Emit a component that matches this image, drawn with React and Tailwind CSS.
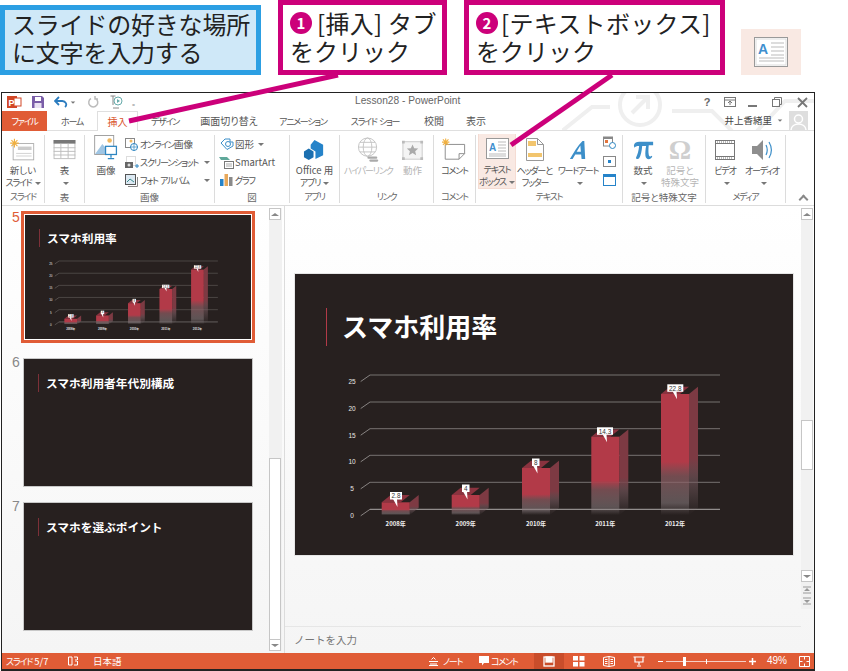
import React from "react";

const FONT = "font-['Noto_Sans_CJK_JP','Noto_Sans',sans-serif]";
const PALT = "[font-feature-settings:'palt']";

function K({ t }) {
  return t.split(/([ァ-ヶー]+)/).map((s, i) =>
    i % 2 === 1 ? (
      <span key={i} className="text-[9px] tracking-[-1.2px]">
        {s}
      </span>
    ) : (
      <span key={i}>{s}</span>
    )
  );
}

const BARS = [
  { x: 86.7, top: 228.3, lx: 95, lw: 12, ly: 218, tail: 100.5, label: "2.8", year: "2008年" },
  { x: 156.7, top: 221, lx: 167, lw: 7.5, ly: 210.5, tail: 170.5, label: "4", year: "2009年" },
  { x: 227, top: 194, lx: 237, lw: 7.5, ly: 184.5, tail: 240.5, label: "8", year: "2010年" },
  { x: 296.3, top: 162.7, lx: 302, lw: 16, ly: 153.3, tail: 310, label: "14.3", year: "2011年" },
  { x: 366, top: 120, lx: 372.3, lw: 16, ly: 110.3, tail: 380, label: "22.8", year: "2012年" },
];
const GRID = [235.3, 208.3, 181.3, 154.7, 128, 101];
const AXIS = ["0", "5", "10", "15", "20", "25"];

function Chart({ id }) {
  const bottom = 241;
  return (
    <svg viewBox="0 90 498 191" className="block w-full">
      <defs>
        <linearGradient id={`front${id}`} x1="0" y1="0" x2="0" y2="1">
          <stop offset="0" stopColor="#b23a48" />
          <stop offset="0.56" stopColor="#b23a48" />
          <stop offset="0.68" stopColor="#8c5a60" stopOpacity="0.75" />
          <stop offset="0.9" stopColor="#8a7d80" stopOpacity="0.55" />
          <stop offset="1" stopColor="#8a7d80" stopOpacity="0" />
        </linearGradient>
        <linearGradient id={`side${id}`} x1="0" y1="0" x2="0" y2="1">
          <stop offset="0" stopColor="#7d3a43" />
          <stop offset="0.56" stopColor="#7d3a43" />
          <stop offset="0.72" stopColor="#7a5a60" stopOpacity="0.6" />
          <stop offset="1" stopColor="#7a6a6d" stopOpacity="0" />
        </linearGradient>
      </defs>
      {GRID.map((y, i) => (
        <g key={y} strokeWidth="0.8" fill="none">
          <path d={`M75 ${y}H425`} stroke={i === 0 ? "#cfcdcc" : "#8c8887"} />
          <path d={`M65.7 ${y + 6.5}L75 ${y}`} stroke="#a09c9b" />
        </g>
      ))}
      {AXIS.map((t, i) => (
        <text key={t} x="57" y={GRID[i] + 8.8} textAnchor="middle" fontSize="6.5" fill="#e8e6e5" fontFamily="Liberation Sans, sans-serif">
          {t}
        </text>
      ))}
      {BARS.map((b) => (
        <g key={b.year}>
          <path d={`M${b.x} ${b.top}l9 -7.3h19l-9 7.3z`} fill="#8a333f" />
          <path d={`M${b.x + 28} ${b.top}l9 -7.3V${bottom - 7.3}l-9 7.3z`} fill={`url(#side${id})`} />
          <rect x={b.x} y={b.top} width="28" height={bottom - b.top} fill={`url(#front${id})`} />
          <rect x={b.lx} y={b.ly} width={b.lw} height="7.5" fill="#fff" />
          <path d={`M${b.tail - 2.5} ${b.ly + 7}h4l0.5 8z`} fill="#fff" />
          <text x={b.lx + b.lw / 2} y={b.ly + 6.2} textAnchor="middle" fontSize="6.4" fill="#333" fontFamily="Liberation Sans, sans-serif">
            {b.label}
          </text>
          <text x={b.x + 14} y="252" textAnchor="middle" fontSize="6" fill="#eee" fontWeight="700" fontFamily="'Noto Sans CJK JP', sans-serif">
            {b.year}
          </text>
        </g>
      ))}
    </svg>
  );
}

function ThumbTitle({ children, top }) {
  return (
    <div className={`flex items-center ml-[14px] ${top}`}>
      <div className="w-px h-[18px] bg-[#7d3038]" />
      <div className="ml-[7px] -mt-[1px] text-[11.7px] leading-[18px] font-bold text-white whitespace-nowrap">{children}</div>
    </div>
  );
}

function Thumb({ num, title, active, chart }) {
  return (
    <div className="flex">
      <div className={`w-[19px] pl-[10px] text-[14px] leading-[20px] font-['Liberation_Sans',sans-serif] ${active ? "text-[#e05c36] -mt-[4px]" : "text-[#888] -mt-[6px]"}`}>{num}</div>
      {active ? (
        <div className="border-[3px] border-[#e05c36] w-[234px] h-[132px] bg-white p-px">
          <div className="h-full bg-[#27201f] overflow-hidden">
            <ThumbTitle top="pt-[14px]">{title}</ThumbTitle>
            {chart && (
              <div className="mt-[9px]">
                <Chart id="t" />
              </div>
            )}
          </div>
        </div>
      ) : (
        <div className="ml-[2px] border border-[#c8c8c8] w-[230px] h-[129px] bg-[#27201f]">
          <ThumbTitle top="pt-[15px]">{title}</ThumbTitle>
        </div>
      )}
    </div>
  );
}

function Caret({ className = "" }) {
  return <span className={`inline-block w-0 h-0 border-x-[3px] border-x-transparent border-t-[3px] border-t-[#777] align-middle ${className}`} />;
}

function ScrollBtn({ up }) {
  return (
    <div className="w-[12px] h-[12px] border border-[#c6c6c6] bg-white flex items-center justify-center">
      <span className={`w-0 h-0 border-x-[4px] border-x-transparent ${up ? "border-b-[3px] border-b-[#888]" : "border-t-[3px] border-t-[#888]"}`} />
    </div>
  );
}

function BigBtn({ icon, lines, gray, w, caretLine }) {
  return (
    <div className={`flex flex-col items-center ${w || ""} shrink-0`}>
      <div className="h-[29px] flex items-center justify-center">{icon}</div>
      <div className={`text-[9.5px] leading-[12px] text-center whitespace-nowrap ${gray ? "text-[#b5b5b5]" : "text-[#555]"}`}>
        {lines.map((l, i) => (
          <div key={i} className="h-[12px]">
            <K t={l} />
            {caretLine === i && <Caret className="ml-[3px]" />}
          </div>
        ))}
      </div>
    </div>
  );
}

function Group({ w, label, children, className = "" }) {
  return (
    <div className={`${w} shrink-0 flex flex-col h-[68px] mt-[4px] border-r border-[#dcdcdc]`}>
      <div className={`h-[57px] flex ${className}`}>{children}</div>
      <div className="text-[9.5px] leading-[12px] text-[#666] text-center whitespace-nowrap">
        <K t={label} />
      </div>
    </div>
  );
}

function SmallRow({ icon, text, caret, textW = "" }) {
  return (
    <div className="flex items-center h-[18px] text-[9.5px] text-[#555] whitespace-nowrap">
      <span className="w-[15px] h-[14px] flex items-center justify-center mr-[1px]">{icon}</span>
      <span className={textW}>
        <K t={text} />
      </span>
      {caret && <Caret className="ml-[4px]" />}
    </div>
  );
}

const NewSlideIcon = (
  <svg width="26" height="24" viewBox="0 0 30 28">
    <rect x="3.5" y="6.5" width="24" height="19" fill="#fff" stroke="#aaa" />
    <rect x="9" y="10" width="16" height="4" fill="#ccc" />
    <path d="M7 18h18M7 21h18" stroke="#ccc" />
    <g stroke="#f0b040" strokeWidth="1.3">
      <path d="M5 1v10M0 6h10M1.5 2.5l7 7M8.5 2.5l-7 7" />
    </g>
  </svg>
);
const TableIcon = (
  <svg width="23" height="20" viewBox="0 0 24 22">
    <rect x="0.5" y="0.5" width="23" height="20" fill="#fff" stroke="#bbb" />
    <rect x="0" y="0" width="24" height="4" fill="#777" />
    <path d="M8 4v16M16 4v16M0 8.5h24M0 12.5h24M0 16.5h24" stroke="#bbb" />
  </svg>
);
const PictureIcon = (
  <svg width="24" height="29" viewBox="0 0 26 32">
    <rect x="0.5" y="0.5" width="21" height="21" fill="#fff" stroke="#999" />
    <path d="M1 21l8 -11 6 7 v4z" fill="#9fc5e3" />
    <circle cx="17" cy="6" r="2.5" fill="#f0b860" />
    <rect x="12.5" y="12.5" width="12" height="9" fill="#fff" stroke="#2e86c1" strokeWidth="1.4" />
    <path d="M18.5 22v3M15 26h7" stroke="#2e86c1" strokeWidth="1.4" />
  </svg>
);
const OfficeIcon = (
  <svg width="23" height="23" viewBox="0 0 24 24">
    <path d="M12 2l9 5v11l-8 4v-8l-5 -3V7z" fill="#2583c9" />
    <path d="M1 14l5 -3 5 3v6l-5 3 -5 -3z" fill="#1b6fb0" />
  </svg>
);
const GlobeIcon = (
  <svg width="23" height="26" viewBox="0 0 24 26" fill="none" stroke="#c4c4c4">
    <circle cx="11" cy="10" r="9.5" />
    <ellipse cx="11" cy="10" rx="4.5" ry="9.5" />
    <path d="M1.5 10h19M3 5h16M3 15h16" />
    <path d="M12 21h8M14 24h7" stroke="#aaa" strokeWidth="2.4" strokeLinecap="round" />
  </svg>
);
const ActionIcon = (
  <svg width="22" height="22" viewBox="0 0 24 24">
    <rect x="1" y="3" width="21" height="19" fill="#f4f4f4" stroke="#c8c8c8" />
    <path d="M11.5 6l1.8 4 4.4.4 -3.3 2.9 1 4.3 -3.9 -2.3 -3.9 2.3 1 -4.3 -3.3 -2.9 4.4 -.4z" fill="#aaa" />
    <path d="M0 2h3v3H0zM20 2h3v3h-3zM0 20h3v3H0zM20 20h3v3h-3z" fill="#bbb" />
  </svg>
);
const CommentIcon = (
  <svg width="24" height="23" viewBox="0 0 26 24" fill="none">
    <path d="M3.5 6.5h21v10l-6 6h-15z" fill="#fff" stroke="#888" />
    <path d="M18.5 22.5v-6h6" stroke="#888" />
    <g stroke="#f0b040" strokeWidth="1.2">
      <path d="M4 0v8M0 4h8M1 1l6 6M7 1l-6 6" />
    </g>
  </svg>
);
const TextBoxIcon = (
  <svg width="23" height="21" viewBox="0 0 23 21">
    <rect x="0.5" y="0.5" width="22" height="20" fill="#fff" stroke="#999" />
    <path d="M12 4h8M12 7h8M12 10h8M12 13h8M3 16h17M3 18h17" stroke="#bbb" />
    <text x="3" y="12.5" fontSize="10" fontWeight="700" fill="#3f8fcf" fontFamily="Liberation Sans, sans-serif">A</text>
  </svg>
);
const HeaderIcon = (
  <svg width="18" height="23" viewBox="0 0 18 23">
    <path d="M0.5 0.5h11l6 6v16h-17z" fill="#fff" stroke="#999" />
    <path d="M11.5 0.5v6h6" fill="none" stroke="#999" />
    <rect x="2" y="3" width="8" height="5" fill="#f2c56e" />
    <rect x="2" y="15" width="14" height="4" fill="#f2c56e" />
  </svg>
);
const WordArtIcon = (
  <svg width="18" height="22" viewBox="0 0 20 22">
    <path d="M1 21C5 14 10 6 15 1h2l1 20h-4l-.5 -5H7l-3 5zM8.5 13h4.7l-.6 -7z" fill="#3d8fc9" />
  </svg>
);
const PiIcon = (
  <svg width="21" height="20" viewBox="0 0 24 21">
    <path d="M1 5c1 -3 3 -4 6 -4h16v4h-5c-.5 4 -.5 8 0 11 .2 1.500 1 2 2 2l1.500 -1 .5 1c-1 2 -2.500 3 -4 3 -2 0 -3.500 -1.500 -3.800 -4 -.3 -3 0 -7 .8 -11h-4.500c-.5 6 -1.500 11 -3.500 14 -1 1.500 -4 1 -3.500 -1 1.500 -3 3 -7 3.500 -13-3 0-4.500 .5-5.500 2z" fill="#3d8fc9" />
  </svg>
);
const OmegaIcon = <span className="text-[28px] leading-[28px] font-bold text-[#cfcfcf] font-['Liberation_Serif',serif]">Ω</span>;
const VideoIcon = (
  <svg width="20" height="20" viewBox="0 0 20 20">
    <rect x="0.500" y="0.500" width="19" height="19" fill="#fff" stroke="#777" />
    <path d="M0 3.500h20M0 16.500h20" stroke="#777" />
    <path d="M2 2h16M2 18h16" stroke="#777" strokeDasharray="1 1" />
  </svg>
);
const AudioIcon = (
  <svg width="22" height="22" viewBox="0 0 22 22" fill="none">
    <path d="M1 7h5l6 -6v20l-6 -6H1z" fill="#8e8e8e" />
    <path d="M15 6c1.500 3 1.500 7 0 10M18 3c3 5 3 11 0 16" stroke="#3d8fc9" strokeWidth="1.200" />
  </svg>
);

const ImgSmall = (
  <svg width="13" height="13" viewBox="0 0 13 13">
    <rect x="0.500" y="0.500" width="9" height="9" fill="#fff" stroke="#888" />
    <circle cx="6" cy="3" r="1.500" fill="#f0b860" />
    <circle cx="9" cy="9" r="3.500" fill="#fff" stroke="#2e86c1" />
    <path d="M5.500 9h7M9 5.500v7" stroke="#2e86c1" strokeWidth="0.700" />
  </svg>
);
const ShotSmall = (
  <svg width="14" height="13" viewBox="0 0 14 13">
    <rect x="1.500" y="0.500" width="9" height="9" fill="none" stroke="#bbb" strokeDasharray="1 1" />
    <rect x="0" y="6" width="8" height="6" fill="#666" />
    <circle cx="4" cy="9" r="1.500" fill="#ddd" />
    <path d="M10 10h4M12 8v4" stroke="#2e86c1" />
  </svg>
);
const AlbumSmall = (
  <svg width="13" height="13" viewBox="0 0 13 13">
    <rect x="0.500" y="0.500" width="10" height="10" fill="#dce9f3" stroke="#555" />
    <path d="M3 12.500h9.500V3" stroke="#888" fill="none" />
    <path d="M2 8l3 -3 4 3" stroke="#3b8a8a" fill="none" />
  </svg>
);
const ShapeSmall = (
  <svg width="14" height="12" viewBox="0 0 14 12" fill="none" stroke="#3d8fc9">
    <path d="M1 5l4 -4h5v3h3v4l-6 3.500z" />
    <circle cx="8" cy="6" r="2.500" />
  </svg>
);
const SmartSmall = (
  <svg width="15" height="13" viewBox="0 0 15 13">
    <path d="M0 1h8l3 3H2z" fill="#5fa89a" />
    <rect x="5.500" y="5.500" width="9" height="7" fill="#fff" stroke="#777" />
    <path d="M7 8h6M7 10h6" stroke="#aaa" />
  </svg>
);
const GraphSmall = (
  <svg width="13" height="12" viewBox="0 0 13 12">
    <rect x="0" y="5" width="3.500" height="7" fill="#2583c9" />
    <rect x="4.500" y="0" width="3.500" height="12" fill="#e8a85a" />
    <rect x="9" y="3" width="3.500" height="9" fill="#8a8a8a" />
  </svg>
);

const TABS = [
  ["ホーム", "w-[50px]"],
  ["挿入", "w-[41px]", true],
  ["デザイン", "w-[54px]"],
  ["画面切り替え", "w-[74px]"],
  ["アニメーション", "w-[74px]"],
  ["スライド ショー", "w-[70px]"],
  ["校閲", "w-[48px]"],
  ["表示", "w-[36px]"],
];

function ViewIcon({ kind }) {
  if (kind === "normal")
    return (
      <svg width="12" height="11" viewBox="0 0 12 11" fill="none" stroke="#fff" strokeWidth="1.300">
        <rect x="1" y="1" width="10" height="9" />
        <rect x="3" y="1" width="6" height="5" fill="#fff" />
      </svg>
    );
  if (kind === "sorter")
    return (
      <svg width="12" height="11" viewBox="0 0 12 11" fill="#fff">
        <rect width="5" height="4.500" />
        <rect x="6.500" width="5" height="4.500" />
        <rect y="6" width="5" height="4.500" />
        <rect x="6.500" y="6" width="5" height="4.500" />
      </svg>
    );
  if (kind === "read")
    return (
      <svg width="12" height="11" viewBox="0 0 12 11" fill="none" stroke="#fff">
        <path d="M.5 1.500L6 .5l5.500 1v8L6 10.500.5 9.500zM6 .5v10M2 3.500h2.500M2 5.500h2.500M2 7.500h2.500M7.500 3.500H10M7.500 5.500H10M7.500 7.500H10" />
      </svg>
    );
  return (
    <svg width="12" height="11" viewBox="0 0 12 11" fill="none" stroke="#fff" strokeWidth="1.200">
      <path d="M.5 1h11M2 1v5h8V1M6 6v3M4 10h4" />
    </svg>
  );
}

export default function App() {
  return (
    <div className={`relative w-[848px] h-[671px] bg-white overflow-hidden text-[#222] ${FONT}`}>
      {/* Callouts */}
      <div className="flex items-end h-[75px]">
        <div className="w-[261px] h-[70px] border-[5px] border-[#2c9fe3] bg-[#cfe8f8] pl-[7px] text-[24px] leading-[28px] tracking-[-0.2px] whitespace-nowrap">
          <div>スライドの好きな場所</div>
          <div>に文字を入力する</div>
        </div>
        <div className="ml-[17px] w-[169px] h-[75px] border-[5px] border-[#cc007a] bg-white pl-[7px] pt-[4px] text-[24px] leading-[28px] whitespace-nowrap">
          <div className="flex items-center tracking-[0.3px]">
            <span className="w-[22px] h-[22px] mr-[5px] rounded-full bg-[#cc007a] text-white text-[15px] leading-[22px] font-bold text-center">1</span>[挿入] タブ
          </div>
          <div>をクリック</div>
        </div>
        <div className="ml-[17px] w-[261px] h-[75px] border-[5px] border-[#cc007a] bg-white pl-[7px] pt-[4px] text-[24px] leading-[28px] whitespace-nowrap">
          <div className="flex items-center tracking-[0.3px]">
            <span className="w-[22px] h-[22px] mr-[3px] rounded-full bg-[#cc007a] text-white text-[15px] leading-[22px] font-bold text-center">2</span>[テキストボックス]
          </div>
          <div>をクリック</div>
        </div>
        <div className="ml-[16px] w-[60px] h-[46px] bg-[#f9e9e3] flex items-center justify-center">
          <svg width="34" height="30" viewBox="0 0 34 30">
            <rect x="0.500" y="0.500" width="33" height="29" fill="#fff" stroke="#999" />
            <rect x="2" y="2" width="30" height="26" fill="none" stroke="#ddd" />
            <path d="M17 6h13M17 10h13M17 14h13M17 18h13M5 21h25M5 24h25" stroke="#bbb" />
            <text x="4" y="17" fontSize="14" fontWeight="700" fill="#3f8fcf" fontFamily="Liberation Sans, sans-serif">A</text>
          </svg>
        </div>
      </div>

      {/* PowerPoint window */}
      <div className="mt-[17px] ml-px w-[814px] h-[579px] border border-[#222] border-b-2 flex flex-col bg-white relative overflow-hidden">
        <svg className="absolute left-[560px] top-0 pointer-events-none" width="252" height="38" viewBox="0 0 252 38" fill="none" stroke="#efefef" strokeWidth="4">
          <circle cx="78" cy="12" r="20" />
          <path d="M70 20l16 -16M74 4h12v12" />
          <path d="M0 38L30 14h18M110 18h40l20 20M195 38l28 -30h30" />
        </svg>

        {/* Title bar */}
        <div className="h-[18px] flex items-center relative shrink-0">
          <div className="w-[5px]" />
          <svg width="15" height="14" viewBox="0 0 15 14" className="shrink-0">
            <rect x="0" y="1" width="10" height="12" fill="#d24726" />
            <rect x="7" y="3" width="7" height="8" fill="#fff" stroke="#d24726" />
            <text x="1.500" y="10.500" fontSize="9" fontWeight="700" fill="#fff" fontFamily="Liberation Sans, sans-serif">P</text>
          </svg>
          <svg width="12" height="12" viewBox="0 0 12 12" className="ml-[10px] shrink-0">
            <path d="M0 0h10l2 2v10H0z" fill="#7a5ea8" />
            <rect x="3" y="1" width="6" height="4" fill="#fff" />
            <rect x="2.500" y="7" width="7" height="5" fill="#e9e2f2" />
          </svg>
          <svg width="14" height="12" viewBox="0 0 14 12" fill="none" className="ml-[10px] shrink-0">
            <path d="M2 5h6a4 3.500 0 0 1 3 6" stroke="#2b7cbf" strokeWidth="1.800" />
            <path d="M5 1L1 5l4 4" stroke="#2b7cbf" strokeWidth="1.800" />
          </svg>
          <Caret className="ml-[2px] scale-75" />
          <svg width="12" height="12" viewBox="0 0 12 12" fill="none" stroke="#bcbcbc" strokeWidth="1.500" className="ml-[11px] shrink-0">
            <path d="M4 2.500a4.500 4.500 0 1 0 4.500 0M8 0v3h3" />
          </svg>
          <svg width="13" height="14" viewBox="0 0 13 14" fill="none" stroke="#888" className="ml-[11px] shrink-0">
            <path d="M.5 1h5M3 1v9" />
            <circle cx="8" cy="6" r="4" stroke="#6aa" />
            <path d="M7 4l3 2 -3 2z" fill="#6aa" stroke="none" />
            <path d="M3 13h6" />
          </svg>
          <span className="ml-[9px] text-[#888] text-[9px] leading-none">₌</span>
          <div className="absolute left-[353px] top-0 text-[10.2px] leading-[16px] text-[#666] font-['Liberation_Sans','Noto_Sans_CJK_JP',sans-serif] whitespace-nowrap">Lesson28 - PowerPoint</div>
          <div className="ml-auto flex items-center text-[#666] mr-[4px] relative">
            <span className="w-[14px] text-center text-[11px] font-bold leading-none font-['Liberation_Sans',sans-serif]">?</span>
            <svg width="12" height="10" viewBox="0 0 12 10" fill="none" stroke="#777" className="ml-[10px]">
              <rect x=".5" y=".5" width="11" height="9" />
              <path d="M.5 3h11M6 8V4.500M4 6l2 -2 2 2" />
            </svg>
            <span className="ml-[12px] w-[9px] h-[2px] bg-[#777] mt-[7px]" />
            <svg width="10" height="10" viewBox="0 0 10 10" fill="none" stroke="#777" className="ml-[15px]">
              <rect x=".5" y="2.500" width="7" height="7" />
              <path d="M2.500 2.500v-2h7v7h-2" />
            </svg>
            <svg width="11" height="11" viewBox="0 0 11 11" fill="none" stroke="#777" strokeWidth="1.800" className="ml-[15px] mr-[2px]">
              <path d="M1 1l9 9M10 1l-9 9" />
            </svg>
          </div>
        </div>

        {/* Tabs */}
        <div className={`h-[20px] flex items-stretch border-b border-[#dfdfdf] shrink-0 relative ${PALT}`}>
          <div className="w-[45px] bg-[#e05c36] text-white text-[10px] leading-[20px] text-center -mb-px">
            <K t="ファイル" />
          </div>
          {TABS.map(([t, w, on]) => (
            <div key={t} className={`${w} text-center text-[10px] leading-[20px] whitespace-nowrap ${on ? "text-[#d9532c] border border-b-0 border-[#dfdfdf] bg-white -mb-px" : "text-[#555]"}`}>
              <K t={t} />
            </div>
          ))}
          <div className="ml-auto flex items-center">
            <span className="text-[9.5px] text-[#444]">井上香緒里</span>
            <Caret className="ml-[5px] mr-[6px] scale-75" />
            <div className="w-[19px] h-[19px] bg-[#dedede] mr-[6px] flex items-end justify-center overflow-hidden">
              <svg width="17" height="17" viewBox="0 0 17 17" fill="#fff">
                <circle cx="8.500" cy="6" r="4" fill="none" stroke="#fff" strokeWidth="1.500" />
                <path d="M1 17c0-4 4-6 7.500-6S16 13 16 17" fill="none" stroke="#fff" strokeWidth="1.500" />
              </svg>
            </div>
          </div>
        </div>

        {/* Ribbon */}
        <div className={`h-[75px] flex border-b border-[#dcdcdc] shrink-0 ${PALT}`}>
          <Group w="w-[43px]" label="スライド" className="justify-center">
            <BigBtn icon={NewSlideIcon} lines={["新しい", "スライド"]} caretLine={1} />
          </Group>
          <Group w="w-[40px]" label="表" className="justify-center">
            <BigBtn icon={TableIcon} lines={["表", ""]} caretLine={1} />
          </Group>
          <Group w="w-[130px]" label="画像" className="pl-[9px]">
            <BigBtn icon={PictureIcon} lines={["画像"]} />
            <div className="ml-[6px] flex flex-col">
              <SmallRow icon={ImgSmall} text="オンライン画像" />
              <SmallRow icon={ShotSmall} text="スクリーンショット" caret textW="w-[60px]" />
              <SmallRow icon={AlbumSmall} text="フォト アルバム" caret textW="w-[60px]" />
            </div>
          </Group>
          <Group w="w-[75px]" label="図" className="pl-[4px]">
            <div className="flex flex-col">
              <SmallRow icon={ShapeSmall} text="図形" caret />
              <SmallRow icon={SmartSmall} text="SmartArt" />
              <SmallRow icon={GraphSmall} text="グラフ" />
            </div>
          </Group>
          <Group w="w-[50px]" label="アプリ" className="justify-center">
            <BigBtn icon={OfficeIcon} lines={["Office 用", "アプリ"]} caretLine={1} />
          </Group>
          <Group w="w-[94px]" label="リンク" className="pl-[4px] gap-[9px]">
            <BigBtn icon={GlobeIcon} lines={["ハイパーリンク"]} gray />
            <BigBtn icon={ActionIcon} lines={["動作"]} gray />
          </Group>
          <Group w="w-[42px]" label="コメント" className="justify-center">
            <BigBtn icon={CommentIcon} lines={["コメント"]} />
          </Group>
          <Group w="w-[147px]" label="テキスト">
            <div className="w-[38px] h-[55px] -mt-[1px] ml-[2px] bg-[#f9e9e3] border border-[#f5dcd3] border-t-0 shrink-0">
              <BigBtn icon={TextBoxIcon} lines={["テキスト", "ボックス"]} caretLine={1} />
            </div>
            <BigBtn w="w-[38px]" icon={HeaderIcon} lines={["ヘッダーと", "フッター"]} />
            <BigBtn w="w-[48px]" icon={WordArtIcon} lines={["ワードアート", ""]} caretLine={1} />
            <div className="flex flex-col items-center gap-[7px] pl-[1px] pt-[1px] shrink-0">
              <svg width="13" height="13" viewBox="0 0 13 13">
                <rect x=".5" y="1" width="9" height="9" fill="#fff" stroke="#888" />
                <rect x="1" y="1" width="8" height="2" fill="#888" />
                <rect x="2" y="4" width="3" height="3" fill="#e2743c" />
                <circle cx="9.500" cy="9.500" r="3" fill="#fff" stroke="#2e86c1" />
              </svg>
              <svg width="13" height="11" viewBox="0 0 13 11">
                <rect x=".5" y=".5" width="12" height="10" fill="#fff" stroke="#888" />
                <rect x="5" y="4" width="3" height="3" fill="#2583c9" />
              </svg>
              <svg width="13" height="12" viewBox="0 0 13 12">
                <rect x=".5" y=".5" width="12" height="11" fill="#fff" stroke="#2583c9" />
                <rect x="0" y="0" width="13" height="3" fill="#2583c9" />
              </svg>
            </div>
          </Group>
          <Group w="w-[83px]" label="記号と特殊文字">
            <BigBtn w="w-[40px]" icon={PiIcon} lines={["数式", ""]} caretLine={1} />
            <BigBtn w="w-[34px]" icon={OmegaIcon} lines={["記号と", "特殊文字"]} gray />
          </Group>
          <Group w="w-[80px]" label="メディア">
            <BigBtn w="w-[38px]" icon={VideoIcon} lines={["ビデオ", ""]} caretLine={1} />
            <BigBtn w="w-[36px]" icon={AudioIcon} lines={["オーディオ", ""]} caretLine={1} />
          </Group>
          <div className="flex-1 flex items-end justify-center pb-[3px] pl-[6px]">
            <span className="w-[7px] h-[7px] border-l-2 border-t-2 border-[#888] rotate-45 translate-y-[1px]" />
          </div>
        </div>

        {/* Body */}
        <div className="flex-1 min-h-0 flex bg-gradient-to-b from-white to-[#f5f5f5]">
          <div className="w-[283px] shrink-0 border-r border-[#dcdcdc] flex">
            <div className="w-[267px] shrink-0 pt-[5px] flex flex-col">
              <Thumb num="5" title="スマホ利用率" active chart />
              <div className="h-[15px] shrink-0" />
              <Thumb num="6" title="スマホ利用者年代別構成" />
              <div className="h-[15px] shrink-0" />
              <Thumb num="7" title="スマホを選ぶポイント" />
            </div>
            <div className="w-[13px] mt-[2px] mb-[2px] flex flex-col bg-[#f1f1f1] items-start">
              <ScrollBtn up />
              <div className="h-[238px]" />
              <div className="w-[12px] flex-1 bg-white border border-[#c6c6c6] border-b-0" />
              <ScrollBtn />
            </div>
          </div>

          <div className="flex-1 min-w-0 flex">
            <div className="flex-1 min-w-0 flex flex-col">
              <div className="flex-1 pl-[9px] pt-[67px]">
                <div className="w-[500px] h-[283px] bg-[#27201f] border border-[#e6e6e6] overflow-hidden">
                  <div className="flex items-center pl-[31px] pt-[34px]">
                    <div className="w-px h-[38px] bg-[#b23a48]" />
                    <div className="ml-[15px] -mt-[3px] text-[26px] leading-[38px] font-bold text-white whitespace-nowrap">スマホ利用率</div>
                  </div>
                  <div className="mt-[18px]">
                    <Chart id="m" />
                  </div>
                </div>
              </div>
              <div className="h-[27px] border-t border-[#e6e6e6] pl-[9px] text-[10.5px] leading-[25px] text-[#777]">ノートを入力</div>
            </div>
            <div className="w-[12px] mr-px shrink-0 pt-[2px] flex flex-col">
              <ScrollBtn up />
              <div className="h-[200px] bg-[#f1f1f1]" />
              <div className="h-[50px] bg-white border border-[#c6c6c6]" />
              <div className="h-[100px] bg-[#f1f1f1]" />
              <ScrollBtn />
              <div className="h-[27px] bg-[#f1f1f1] flex flex-col items-center justify-around py-[2px]">
                <svg width="8" height="8" viewBox="0 0 8 8" fill="#999"><path d="M0 .5h8v1H0zM4 2l3 3H1zM0 6.500h8v1H0z" /></svg>
                <svg width="8" height="8" viewBox="0 0 8 8" fill="#999"><path d="M0 .5h8v1H0zM4 6L1 3h6zM0 6.500h8v1H0z" /></svg>
              </div>
            </div>
          </div>
        </div>

        {/* Status bar */}
        <div className={`h-[16px] bg-[#e05c36] text-white text-[9.5px] leading-[16px] flex items-center shrink-0 whitespace-nowrap ${PALT}`}>
          <span className="ml-[4px] w-[62px]"><K t="スライド 5/7" /></span>
          <svg width="11" height="10" viewBox="0 0 11 10" fill="none" stroke="#fff" className="ml-0">
            <path d="M.5 1h3.500v8H.5zM6 1h3.500v3M6 9h3.500V5M8 3v3" />
          </svg>
          <span className="ml-[14px] w-[28px]">日本語</span>
          <div className="ml-[308px] flex items-center">
            <svg width="9" height="9" viewBox="0 0 9 9" stroke="#fff" fill="none"><path d="M0 4.500h9M1 7h7M0 8.500h9M2.500 2.500l2 -2 2 2" /></svg>
            <span className="ml-[5px] w-[36px]"><K t="ノート" /></span>
            <svg width="10" height="10" viewBox="0 0 10 10" fill="#fff"><path d="M0 0h10v7H5L3 9.500V7H0z" /></svg>
            <span className="ml-[2px] w-[43px]"><K t="コメント" /></span>
          </div>
          <div className="w-[30px] h-full bg-[#c94d2b] flex items-center justify-center"><ViewIcon kind="normal" /></div>
          <div className="w-[30px] flex justify-center"><ViewIcon kind="sorter" /></div>
          <div className="w-[30px] flex justify-center"><ViewIcon kind="read" /></div>
          <div className="w-[30px] flex justify-center"><ViewIcon kind="show" /></div>
          <span className="ml-[4px] w-[5px] h-px bg-white" />
          <div className="ml-[3px] w-[80px] h-px bg-white/70 relative">
            <span className="absolute left-[17px] -top-[4px] w-[3px] h-[9px] bg-white" />
            <span className="absolute left-[40px] -top-[2px] w-px h-[5px] bg-white" />
          </div>
          <svg width="7" height="7" viewBox="0 0 7 7" stroke="#fff" strokeWidth="1.500" className="ml-[3px]"><path d="M0 3.500h7M3.500 0v7" /></svg>
          <span className="ml-[11px] text-[10px] w-[30px] font-['Liberation_Sans',sans-serif]">49%</span>
          <svg width="11" height="11" viewBox="0 0 11 11" fill="none" stroke="#fff" className="ml-[2px]">
            <path d="M.5 .5h10v10H.5zM.5 5.500h3M7.500 5.500h3M5.500 .5v3M5.500 7.500v3" />
          </svg>
        </div>
      </div>

      {/* Leader lines */}
      <svg className="absolute left-0 top-0 pointer-events-none" width="848" height="160" fill="none" stroke="#cc007a" strokeWidth="5">
        <path d="M338 75L129 121" />
        <path d="M612 75L511 145" />
      </svg>
    </div>
  );
}
